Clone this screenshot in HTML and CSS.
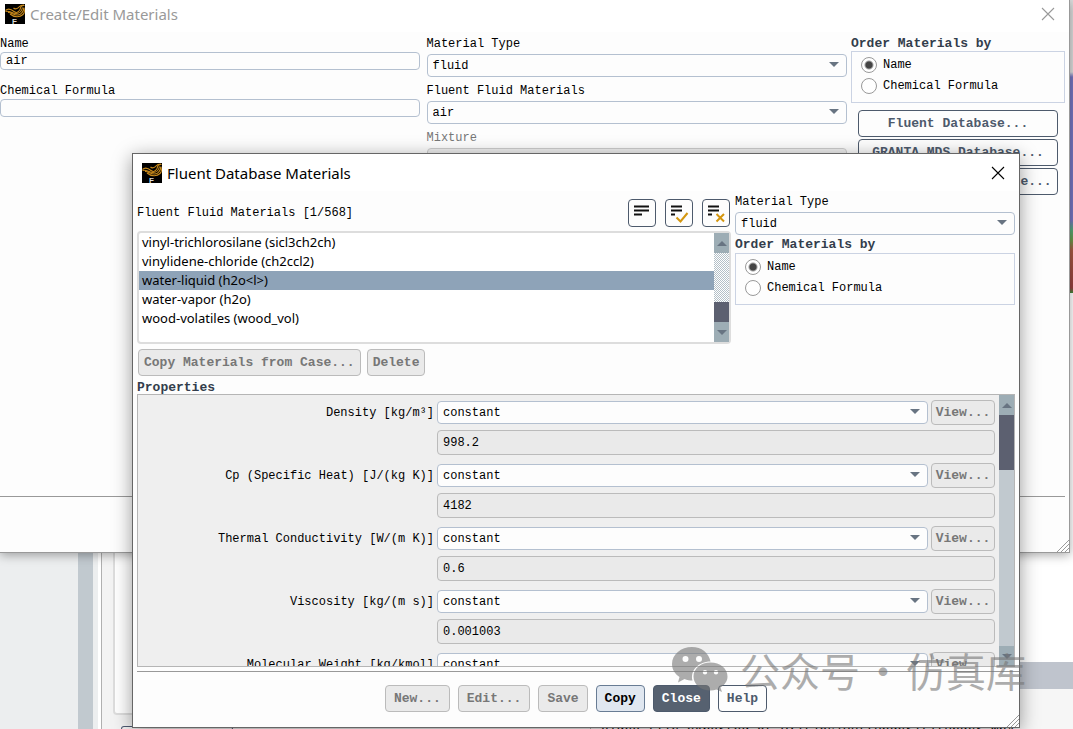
FILE: index.html
```html
<!DOCTYPE html>
<html lang="en">
  <head>
    <meta charset="UTF-8" />
    <title>Fluent Database Materials</title>
    <link rel="stylesheet" href="styles.css">
  </head>
  <body>
    <svg width="0" height="0" class="defs">
      <symbol id="app-icon" viewBox="0 0 20 20">
        <rect width="20" height="20" fill="#000" />
        <g fill="none" stroke="#c98a1b" stroke-width="1.1">
          <path d="M.5 6.500C3 4 6 5 9 7.500S15 7 15.500 4S17.500 1.500 19.500 1.500" />
          <path d="M.5 7.500C4 6 7 9.500 11 9.500S17 6 17.500 3.500" />
          <path d="M8.500 4C10 5.500 12.500 5 14 3S17 1 19 1" />
          <path d="M3 8.500C6 8 9 11.500 13 11S18.500 7 19 3.500" />
          <path d="M5 10C9 13.500 15 13.500 18 10.500S18.500 5 19 4" />
        </g>
        <text x="7" y="20" fill="#ddd" font-family="Liberation Sans" font-weight="bold" font-size="8">F</text>
      </symbol>
      <symbol id="close-icon" viewBox="0 0 14 14">
        <path d="M1 1L13 13M13 1L1 13" fill="none" stroke="currentColor" stroke-width="1.1" />
      </symbol>
      <symbol id="grip" viewBox="0 0 12 12">
        <path d="M0 12L12 0M4 12L12 4M8 12L12 8" fill="none" stroke="#999" />
      </symbol>
      <symbol id="lines" viewBox="0 0 26 26">
        <path d="M5 6.500H20M5 10.500H20M5 14.500H13" stroke="#111" stroke-width="2" />
      </symbol>
      <symbol id="lines-short" viewBox="0 0 26 26">
        <path d="M5 6.500H16M5 10.500H16M5 14.500H9" stroke="#111" stroke-width="2" />
      </symbol>
    </svg>

    <div class="desktop">
      <div class="workspace">
        <div class="tree"></div>
        <div class="tree-scroll"></div>
        <div class="splitter"></div>
        <div class="task">
          <div class="task-box"></div>
          <div class="task-btn"></div>
        </div>
        <div class="view">
          <div class="contour"></div>
          <div class="graphics"></div>
          <div class="tabbar"></div>
          <div class="console">Video file exported at D:/tjas/yut(under)(1(under.mp4</div>
        </div>
      </div>

      <section class="window edit-window">
        <header class="titlebar">
          <svg class="app-icon"><use href="#app-icon" /></svg>
          <h1>Create/Edit Materials</h1>
          <button class="close" aria-label="Close"><svg><use href="#close-icon" /></svg></button>
        </header>
        <div class="edit-body">
          <div class="col text-col">
            <label for="name">Name</label>
            <input id="name" type="text" value="air">
            <label for="formula">Chemical Formula</label>
            <input id="formula" type="text">
          </div>
          <div class="col select-col">
            <label for="type">Material Type</label>
            <div class="select"><select id="type"><option>fluid</option></select></div>
            <label for="fluids">Fluent Fluid Materials</label>
            <div class="select"><select id="fluids"><option>air</option></select></div>
            <label for="mixture" class="off">Mixture</label>
            <div class="select off"><select id="mixture" disabled><option>none</option></select></div>
          </div>
          <div class="col side-col">
            <fieldset>
              <legend>Order Materials by</legend>
              <div class="radio-box">
                <label><input type="radio" name="order1" checked>Name</label>
                <label><input type="radio" name="order1">Chemical Formula</label>
              </div>
            </fieldset>
            <div class="db-buttons">
              <button class="btn">Fluent Database...</button>
              <button class="btn">GRANTA MDS Database...</button>
              <button class="btn">User-Defined Database...</button>
            </div>
          </div>
        </div>
        <footer class="edit-footer"></footer>
        <svg class="grip"><use href="#grip" /></svg>
      </section>

      <section class="window db-window">
        <header class="titlebar">
          <svg class="app-icon"><use href="#app-icon" /></svg>
          <h1>Fluent Database Materials</h1>
          <button class="close" aria-label="Close"><svg><use href="#close-icon" /></svg></button>
        </header>
        <div class="db-body">
          <div class="picker">
            <div class="list-side">
              <div class="list-head">
                <span id="list-label">Fluent Fluid Materials [1/568]</span>
                <button class="tool" aria-label="Filter list"><svg><use href="#lines" /></svg></button>
                <button class="tool" aria-label="Select all">
                  <svg viewBox="0 0 26 26"><use href="#lines-short" /><path d="M10.500 17.500L14.500 21.500L21.500 13" fill="none" stroke="#d4960f" stroke-width="2" /></svg>
                </button>
                <button class="tool" aria-label="Deselect all">
                  <svg viewBox="0 0 26 26"><use href="#lines-short" /><path d="M13.500 14L21 21.500M21 14L13.500 21.500" fill="none" stroke="#d4960f" stroke-width="2" /></svg>
                </button>
              </div>
              <div class="list-box">
                <ul role="listbox" aria-labelledby="list-label">
                  <li role="option">vinyl-trichlorosilane (sicl3ch2ch)</li>
                  <li role="option">vinylidene-chloride (ch2ccl2)</li>
                  <li role="option" class="selected" aria-selected="true">water-liquid (h2o&lt;l&gt;)</li>
                  <li role="option">water-vapor (h2o)</li>
                  <li role="option">wood-volatiles (wood_vol)</li>
                </ul>
                <div class="scrollbar dotted">
                  <span class="up"></span>
                  <span class="track"></span>
                  <span class="thumb"></span>
                  <span class="down"></span>
                </div>
              </div>
            </div>
            <div class="type-side">
              <label for="dbtype">Material Type</label>
              <div class="select"><select id="dbtype"><option>fluid</option></select></div>
              <fieldset>
                <legend>Order Materials by</legend>
                <div class="radio-box">
                  <label><input type="radio" name="order2" checked>Name</label>
                  <label><input type="radio" name="order2">Chemical Formula</label>
                </div>
              </fieldset>
            </div>
          </div>

          <div class="list-actions">
            <button class="btn" disabled>Copy Materials from Case...</button>
            <button class="btn" disabled>Delete</button>
          </div>

          <h2>Properties</h2>
          <div class="props">
            <div class="props-list">
              <div class="prop">
                <label for="p1">Density [kg/m³]</label>
                <div class="select"><select id="p1"><option>constant</option></select></div>
                <button class="btn" disabled>View...</button>
                <input type="text" value="998.2" aria-label="Density value" readonly>
              </div>
              <div class="prop">
                <label for="p2">Cp (Specific Heat) [J/(kg K)]</label>
                <div class="select"><select id="p2"><option>constant</option></select></div>
                <button class="btn" disabled>View...</button>
                <input type="text" value="4182" aria-label="Cp value" readonly>
              </div>
              <div class="prop">
                <label for="p3">Thermal Conductivity [W/(m K)]</label>
                <div class="select"><select id="p3"><option>constant</option></select></div>
                <button class="btn" disabled>View...</button>
                <input type="text" value="0.6" aria-label="Thermal conductivity value" readonly>
              </div>
              <div class="prop">
                <label for="p4">Viscosity [kg/(m s)]</label>
                <div class="select"><select id="p4"><option>constant</option></select></div>
                <button class="btn" disabled>View...</button>
                <input type="text" value="0.001003" aria-label="Viscosity value" readonly>
              </div>
              <div class="prop">
                <label for="p5">Molecular Weight [kg/kmol]</label>
                <div class="select"><select id="p5"><option>constant</option></select></div>
                <button class="btn" disabled>View...</button>
              </div>
            </div>
            <div class="scrollbar">
              <span class="up"></span>
              <span class="thumb"></span>
              <span class="track"></span>
              <span class="down"></span>
            </div>
          </div>
        </div>
        <footer class="db-footer">
          <button class="btn" disabled>New...</button>
          <button class="btn" disabled>Edit...</button>
          <button class="btn" disabled>Save</button>
          <button class="btn copy">Copy</button>
          <button class="btn primary">Close</button>
          <button class="btn">Help</button>
        </footer>
        <svg class="grip"><use href="#grip" /></svg>
      </section>

      <div class="watermark">
        <svg viewBox="0 0 56 46">
          <path fill-rule="evenodd" d="M20 0C9 0 0 7.500 0 17C0 22.500 3 27 7.500 30L6 35.500L12.500 32C15 33 18 33.500 20.500 33.500C18 24 26 14.500 38.500 14.500C37 6 29.500 0 20 0ZM13.500 9a3 3 0 1 1 0 6a3 3 0 1 1 0-6ZM27 9a3 3 0 1 1 0 6a3 3 0 1 1 0-6Z" />
          <path fill-rule="evenodd" d="M38.500 15.500C29 15.500 21.500 21.500 21.500 29.500S29 43.500 38.500 43.500C40.500 43.500 42.500 43 44.500 42.500L50 45L48.500 40.500C53 37.500 55.500 34 55.500 29.500C55.500 21.500 48 15.500 38.500 15.500ZM33 23a2.200 2.200 0 1 1 0 4.400a2.200 2.200 0 1 1 0-4.400ZM44 23a2.200 2.200 0 1 1 0 4.400a2.200 2.200 0 1 1 0-4.400Z" />
        </svg>
        <span>公众号</span><span class="dot">·</span><span>仿真库</span>
      </div>
    </div>
  </body>
</html>
```
FILE: styles.css
```css
* {
  box-sizing: border-box;
}
body {
  margin: 0;
  font-family: "Liberation Mono", monospace;
  font-size: 12px;
  line-height: 16px;
  color: #000;
}
.defs {
  position: absolute;
}
.desktop {
  position: relative;
  height: 100vh;
  overflow: hidden;
  background: #fff;
}

/* main application behind the dialogs */
.workspace {
  display: flex;
  height: 100%;
}
.tree {
  width: 78px;
  background: #eceeef;
}
.tree-scroll {
  width: 15px;
  background: #c1c9cf;
}
.splitter {
  width: 9px;
  border-left: 5px solid #eceeef;
  border-right: 1px solid #b0b0b0;
}
.task {
  display: flex;
  flex-direction: column;
  width: 488px;
  padding: 0 0 0 11px;
  background: #f3f3f3;
}
.task-box {
  flex: 1;
  background: #fff;
  border: 2px solid #ddd;
  border-radius: 4px;
}
.task-btn {
  width: 112px;
  height: 3px;
  margin: 11px 0 0 8px;
  border: 1px solid #4d5a72;
  border-bottom: none;
  border-radius: 4px 4px 0 0;
}
.view {
  display: flex;
  flex: 1;
  flex-direction: column;
  border-left: 1px solid #aaa;
}
.contour {
  height: 293px;
  background: linear-gradient(#ddd 72px, #7676c0 77px, #7676c0 220px, #55a878 230px, #6a9a4a 240px, #a85c44 250px, #974040 288px, #3f8a3a 293px);
}
.graphics {
  flex: 1;
}
.tabbar {
  height: 27px;
  background: #bfc4cd;
}
.console {
  height: 40px;
  padding: 34px 0 0 10px;
  overflow: hidden;
  background: #f6f6f6;
  font-size: 13px;
  white-space: nowrap;
}

/* windows */
.window {
  position: absolute;
  display: flex;
  flex-direction: column;
  background: #fdfdfd;
}
.edit-window {
  inset: 0 3px 176px 0;
  border-right: 1px solid #999;
  border-bottom: 1px solid #999;
  box-shadow: 0 2px 10px rgba(0, 0, 0, 0.35);
}
.db-window {
  inset: 153px 53px 1px 132px;
  border: 1px solid #666;
  box-shadow: 0 4px 18px rgba(0, 0, 0, 0.4);
}
.titlebar {
  display: flex;
  align-items: center;
  gap: 5px;
  height: 37px;
  padding: 0 14px 0 9px;
  background: #fff;
}
.edit-window .titlebar {
  height: 32px;
  padding: 0 14px 4px 5px;
  color: #999;
}
.app-icon {
  width: 20px;
  height: 20px;
}
h1 {
  flex: 1;
  margin: 0;
  font: 15px/20px "Noto Sans", sans-serif;
}
.close {
  height: 14px;
  padding: 0;
  border: none;
  background: none;
  color: inherit;
}
.close svg {
  display: block;
  width: 14px;
  height: 14px;
}
.grip {
  position: absolute;
  right: 0;
  bottom: 0;
  width: 12px;
  height: 12px;
}

/* form controls */
.off {
  color: #777;
}
input[type="text"],
select,
.btn {
  font-family: inherit;
  border: 1px solid #b4c0d0;
  border-radius: 4px;
  background: #fdfdfd;
}
input[type="text"] {
  width: 100%;
  height: 18px;
  padding: 0 5px;
  font-size: 12px;
  color: #000;
}
input[type="text"][readonly] {
  height: 25px;
  border-color: #bbb;
  background: #eaeaea;
}
.select {
  position: relative;
  height: 23px;
}
.select::after {
  content: "";
  position: absolute;
  top: 8px;
  right: 8px;
  border: 5px solid transparent;
  border-top-color: #687482;
  border-bottom: none;
  pointer-events: none;
}
select {
  display: block;
  width: 100%;
  height: 23px;
  padding: 0 5px;
  font-size: 12px;
  color: #000;
  appearance: none;
}
.off select {
  border-color: #bbb;
  background: #eaeaea;
}
.btn {
  height: 27px;
  padding: 0 5px;
  border-color: #4d5a6c;
  font-size: 13px;
  font-weight: bold;
  color: #4d5a6c;
  white-space: nowrap;
}
.btn:disabled {
  border-color: #bbb;
  background: #eaeaea;
  color: #777;
}
fieldset {
  margin: 0;
  padding: 0;
  border: none;
  min-width: 0;
}
legend,
h2 {
  margin: 0;
  padding: 0;
  font-size: 13px;
  line-height: 16px;
  font-weight: bold;
  color: #333d4c;
}
.radio-box {
  height: 52px;
  padding: 2px 9px;
  border: 1px solid #cbd3e3;
}
.radio-box label {
  display: flex;
  align-items: center;
  gap: 6px;
  height: 21px;
}
input[type="radio"] {
  width: 16px;
  height: 16px;
  margin: 0;
  border: 1px solid #999;
  border-radius: 50%;
  background: #fff;
  appearance: none;
}
input[type="radio"]:checked {
  background: radial-gradient(circle, #444 3px, #fff 5px);
}

/* Create/Edit Materials */
.edit-body {
  display: grid;
  grid-template-columns: 1fr 1fr 214px;
  flex: 1;
  padding: 4px 4px 0 0;
}
.col {
  display: flex;
  flex-direction: column;
}
.text-col {
  margin-right: 6px;
}
.text-col input {
  margin-bottom: 13px;
}
.select-col {
  margin: 0 4px 0 1px;
}
.select-col .select {
  margin: 2px 0 6px;
}
.side-col legend {
  line-height: 15px;
}
.db-buttons {
  display: flex;
  flex-direction: column;
  gap: 2px;
  padding: 7px;
}
.edit-footer {
  height: 56px;
  margin-right: 4px;
  border-top: 1px solid #999;
}

/* Fluent Database Materials */
.db-body {
  display: flex;
  flex: 1;
  flex-direction: column;
  min-height: 0;
  padding: 3px 4px 4px;
}
.picker {
  display: grid;
  grid-template-columns: 1fr 280px;
  gap: 4px;
}
.list-head {
  display: flex;
  align-items: center;
  gap: 9px;
  height: 37px;
  padding: 1px 1px 0 0;
}
.list-head span {
  flex: 1;
}
.tool {
  width: 28px;
  height: 28px;
  padding: 0;
  border: 1px solid #4d5a6c;
  border-radius: 4px;
  background: #fdfdfd;
}
.tool svg {
  display: block;
  width: 26px;
  height: 26px;
}
.list-box {
  display: flex;
  height: 113px;
  border: 2px solid #ddd;
  border-radius: 4px;
  background: #fff;
}
.list-box ul {
  flex: 1;
  margin: 0;
  padding: 0;
  list-style: none;
  font: 13px/19px "Noto Sans", sans-serif;
}
.list-box li {
  padding-left: 3px;
}
.list-box .selected {
  background: #8ea3b8;
}
.type-side {
  display: flex;
  flex-direction: column;
}
.type-side .select {
  margin: 2px 0;
}
.scrollbar {
  display: flex;
  flex-direction: column;
  width: 15px;
  background: #c1c9cf;
}
.scrollbar .up,
.scrollbar .down {
  display: grid;
  place-items: center;
  height: 20px;
  background: #9dadb5;
}
.up::before,
.down::before {
  content: "";
  border: 5px solid transparent;
  border-bottom-color: #687482;
  border-top: none;
}
.down::before {
  border-top: 5px solid #687482;
  border-bottom: none;
}
.track {
  flex: 1;
}
.thumb {
  height: 55px;
  background: #5c6070;
}
.dotted .track {
  background: repeating-conic-gradient(#b4c0c8 0 25%, #fff 0 50%) 0 0 / 2px 2px;
}
.dotted .thumb {
  height: 20px;
}
.list-actions {
  display: flex;
  gap: 6px;
  padding: 5px 1px;
}
h2 {
  line-height: 13px;
}
.props {
  display: flex;
  flex: 1;
  min-height: 0;
  overflow: hidden;
  border: 1px solid #b5b5b5;
  background: #efefef;
}
.props-list {
  flex: 1;
  padding: 5px 4px 0 0;
}
.prop {
  display: grid;
  grid-template-columns: 296px 1fr 64px;
  align-items: center;
  gap: 5px 3px;
  margin-bottom: 8px;
}
.prop label {
  text-align: right;
}
.prop .btn {
  height: 25px;
  padding: 0 3px;
}
.prop input {
  grid-column: 2 / 4;
}
.db-footer {
  display: flex;
  justify-content: center;
  gap: 8px;
  height: 56px;
  margin-left: 4px;
  padding: 13px 4px 0 0;
  border-top: 1px solid #999;
}
.db-footer .btn {
  padding: 0 8px;
}
.db-footer .copy {
  border-color: #687c94;
  background: #e0e7f0;
  color: #000;
}
.db-footer .primary {
  background: #566170;
  color: #fff;
}

.watermark {
  position: absolute;
  right: 47px;
  bottom: 36px;
  display: flex;
  align-items: center;
  color: #777;
  font: 40px/44px "Noto Sans CJK SC", sans-serif;
  opacity: 0.6;
}
.watermark svg {
  width: 56px;
  height: 46px;
  margin-right: 12px;
  fill: #777;
}
.dot {
  width: 46px;
  text-align: center;
}
```
